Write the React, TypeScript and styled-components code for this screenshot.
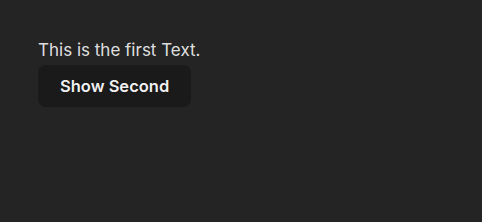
import styled, { createGlobalStyle } from 'styled-components';
import { useState } from 'react';

const GlobalStyle = createGlobalStyle`
  body {
    margin: 0;
    background: #242424;
    color: rgba(255, 255, 255, 0.87);
    font-family: Inter, "Noto Sans", sans-serif;
    line-height: 1.5;
    font-weight: 400;
  }
`;

const Page = styled.div`
  padding: 38px;
  display: flex;
  flex-direction: column;
  align-items: flex-start;
  gap: 1px;
`;

const Text = styled.p`
  margin: 0;
  font-size: 17px;
`;

const Button = styled.button`
  border-radius: 8px;
  border: 1px solid transparent;
  padding: 10px 21px;
  font-size: 16.5px;
  line-height: normal;
  font-weight: 600;
  font-family: inherit;
  background-color: #1a1a1a;
  color: rgba(255, 255, 255, 0.95);
  cursor: pointer;
`;

export default function App() {
  const [second, setSecond] = useState(false);
  return (
    <>
      <GlobalStyle />
      <Page>
        <Text>{second ? 'This is the second Text.' : 'This is the first Text.'}</Text>
        <Button onClick={() => setSecond(s => !s)}>
          {second ? 'Show First' : 'Show Second'}
        </Button>
      </Page>
    </>
  );
}
